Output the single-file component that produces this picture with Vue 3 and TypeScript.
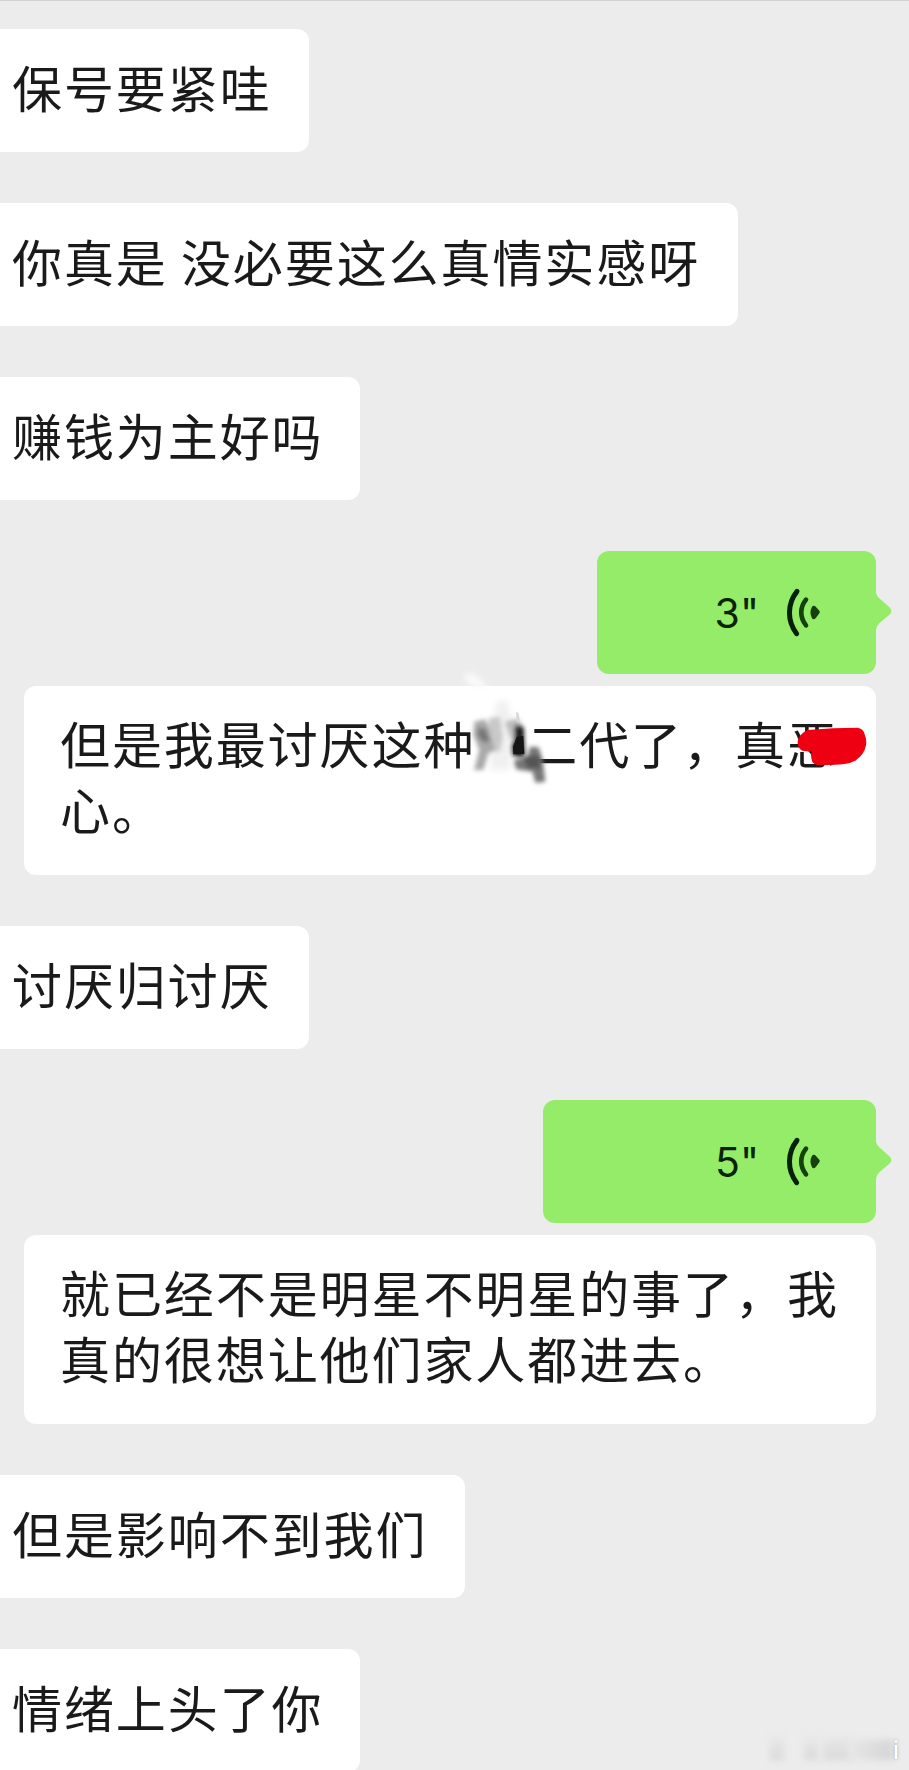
<script setup lang="ts">
interface Message {
  kind: 'received' | 'voice' | 'transcript'
  lines?: string[]
  width: number
  seconds?: number
  smudged?: boolean
}

const messages: Message[] = [
  { kind: 'received', lines: ['保号要紧哇'], width: 309 },
  { kind: 'received', lines: ['你真是 没必要这么真情实感呀'], width: 738 },
  { kind: 'received', lines: ['赚钱为主好吗'], width: 360 },
  { kind: 'voice', seconds: 3, width: 279 },
  { kind: 'transcript', lines: ['但是我最讨厌这种\u3000二代了，真恶', '心。'], width: 852, smudged: true },
  { kind: 'received', lines: ['讨厌归讨厌'], width: 309 },
  { kind: 'voice', seconds: 5, width: 333 },
  { kind: 'transcript', lines: ['就已经不是明星不明星的事了，我', '真的很想让他们家人都进去。'], width: 852 },
  { kind: 'received', lines: ['但是影响不到我们'], width: 465 },
  { kind: 'received', lines: ['情绪上头了你'], width: 360 },
]
</script>

<template>
  <main class="chat">
    <div
      v-for="(m, i) in messages"
      :key="i"
      class="bubble"
      :class="m.kind"
      :style="{ width: m.width + 'px' }"
    >
      <template v-if="m.kind === 'voice'">
        <span class="seconds">{{ m.seconds }}"</span>
        <svg class="wave" viewBox="615 135 120 165" fill="none" stroke-linecap="round">
          <path d="M654 154C624 192 624 243 653 281" stroke="#06200a" stroke-width="15" />
          <path d="M681 179C662 203 662 232 681 256" stroke="#17400f" stroke-width="14" />
          <path d="M699 200Q705 194 711 201L721 212Q724 216 721 220L711 233Q704 241 699 235Q690 217 699 200Z" fill="#17400f" />
        </svg>
        <svg class="tail" viewBox="0 0 48 114">
          <path d="M0 0Q3 10 10 16L42 44Q50 54 42 64L10 91Q3 97 0 110Z" fill="#95ec69" />
        </svg>
      </template>
      <template v-else>
        <p v-for="line in m.lines" :key="line" class="line">{{ line }}</p>
      </template>
      <template v-if="m.smudged">
        <svg class="smudge" viewBox="0 0 390 420">
          <defs>
            <filter id="soft" x="-40%" y="-40%" width="180%" height="180%">
              <feGaussianBlur stdDeviation="6" />
            </filter>
            <filter id="wide" x="-40%" y="-40%" width="180%" height="180%">
              <feGaussianBlur stdDeviation="9" />
            </filter>
          </defs>
          <g filter="url(#wide)">
            <path d="M70 45L95 40L140 75L125 90L85 72Z" fill="#fbfbfb" />
            <path d="M170 125L200 120L215 170L210 330L150 330L160 180Z" fill="#f0f0f0" />
          </g>
          <g filter="url(#soft)">
            <path d="M103 185L135 178L160 225L170 270L145 280L130 330L102 330L118 270L100 225Z" fill="#a9a9a9" />
            <path d="M112 205L135 205L150 240L135 250L115 232Z" fill="#777" />
            <path d="M145 175L180 170L188 230L180 275L165 270L150 220Z" fill="#c9c9c9" />
            <path d="M195 185L235 175L250 205L245 240L215 245Z" fill="#bbb" />
            <path d="M222 300L262 290L270 260L296 262L308 300L316 365L286 368L278 335L228 328Z" fill="#777" />
            <path d="M250 290L298 285L302 325L262 325Z" fill="#555" />
          </g>
          <path d="M226 198L250 202L255 285L244 292L218 287L216 255L228 238Z" fill="#171717" filter="url(#soft)" />
          <path d="M230 230L250 228L253 282L220 283L219 260Z" fill="#151515" />
          <path d="M228 155L236 160L240 185L230 187Z" fill="#d8d8d8" />
        </svg>
        <svg class="marker" viewBox="0 0 540 600">
          <path d="M262 150Q340 143 412 143Q430 145 434 163Q441 180 438 196Q433 224 406 242Q382 254 345 254L295 256Q275 253 274 235Q272 220 276 215L247 212Q232 204 233 187Q235 163 262 150Z" fill="#ee0012" />
        </svg>
      </template>
    </div>
    <div class="watermark">
      <i class="blot one"></i>
      <i class="blot two"></i>
      <i class="blot three"></i>
      <i class="blot four"></i>
      <span class="mark">i</span>
    </div>
  </main>
</template>

<style>
body {
  margin: 0;
  background: #ececec;
}
</style>

<style scoped>
.chat {
  position: relative;
  box-sizing: border-box;
  width: 909px;
  height: 1770px;
  padding-top: 28px;
  border-top: 1px solid #d2d2d2;
  background: #ececec;
  overflow: hidden;
  display: flex;
  flex-direction: column;
  align-items: flex-start;
  font-family: "Noto Sans CJK SC", sans-serif;
  color: #1a1a1a;
}
.bubble {
  position: relative;
  flex: none;
  box-sizing: border-box;
  margin-bottom: 51px;
  border-radius: 12px;
  background: #fff;
}
.received {
  height: 123px;
  padding: 24px 0 0 12px;
  border-radius: 0 12px 12px 0;
}
.transcript {
  height: 189px;
  margin-left: 24px;
  padding: 23px 0 0 36px;
}
.line {
  margin: 0;
  font-size: 50px;
  line-height: 66px;
  letter-spacing: 1.92px;
  white-space: pre;
}
.voice {
  height: 123px;
  margin: 0 33px 12px 0;
  align-self: flex-end;
  background: #95ec69;
  display: flex;
  align-items: center;
  justify-content: flex-end;
  padding-right: 52px;
}
.seconds {
  font-family: Inter, sans-serif;
  font-size: 41px;
  line-height: 50px;
  color: #0a2306;
}
.wave {
  width: 40px;
  height: 55px;
  margin-left: 25px;
}
.tail {
  position: absolute;
  left: 100%;
  top: 42px;
  width: 16px;
  height: 38px;
}
.smudge {
  position: absolute;
  left: 416px;
  top: -26px;
  width: 130px;
  height: 140px;
}
.marker {
  position: absolute;
  left: 696px;
  top: -6px;
  width: 180px;
  height: 200px;
}
.watermark {
  position: absolute;
  right: 6px;
  bottom: 3px;
  width: 140px;
  height: 40px;
}
.blot {
  position: absolute;
  bottom: 7px;
  height: 28px;
  filter: blur(3px);
  background: linear-gradient(#ececec, #d9d9d9);
}
.one {
  left: 7px;
  width: 14px;
}
.two {
  left: 41px;
  width: 14px;
}
.three {
  left: 60px;
  width: 28px;
}
.four {
  left: 86px;
  width: 44px;
  height: 20px;
  background: linear-gradient(100deg, #e8e8e8, #d4d4d4);
}
.mark {
  position: absolute;
  right: 4px;
  bottom: 2px;
  font-family: Roboto, sans-serif;
  font-size: 26px;
  line-height: 30px;
  color: #fff;
  text-shadow: 0 0 3px #999;
}
</style>
